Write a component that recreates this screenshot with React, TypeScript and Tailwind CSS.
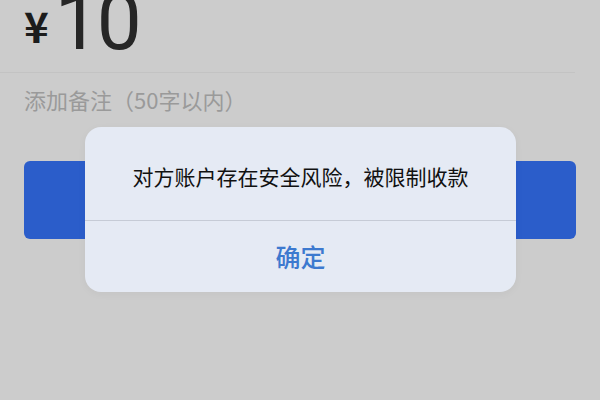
export default function App() {
  return (
    <div
      className="relative h-[400px] w-[600px] overflow-hidden bg-[#cccccc]"
      style={{ fontFamily: '"Noto Sans CJK SC", "Noto Sans", sans-serif' }}
    >
      <div className="flex items-end pl-[24px] h-[66px] -mt-[2px]">
        <span className="text-[42px] font-bold leading-none text-[#1c1c1c] mb-[18px]">¥</span>
        <span
          className="ml-[6px] text-[80px] leading-none text-[#262626] tracking-[-3px] mb-[2px]"
          style={{ fontFamily: '"Roboto", "Liberation Sans", sans-serif' }}
        >
          10
        </span>
      </div>
      <div className="mt-[8px] h-px w-[575px] bg-[#c3c3c3]" />
      <div className="mt-[11px] pl-[24px] text-[22px] leading-[30px] text-[#9a9a9a]">
        添加备注（50字以内）
      </div>
      <div className="mx-[24px] mt-[47px] h-[78px] rounded-[6px] bg-[#2b5dca]" />

      <div className="absolute left-[85px] top-[127px] w-[431px] h-[165px] rounded-[16px] bg-[#e5eaf4] flex flex-col shadow-[0_2px_8px_rgba(0,0,0,0.04)]">
        <div className="h-[93px] flex items-center justify-center pt-[6px] text-[21px] text-[#111111]">
          对方账户存在安全风险，被限制收款
        </div>
        <div className="h-px bg-[#c6cbd6]" />
        <div className="flex-1 flex items-center justify-center text-[25px] font-medium text-[#3d79cf]">
          确定
        </div>
      </div>
    </div>
  );
}
